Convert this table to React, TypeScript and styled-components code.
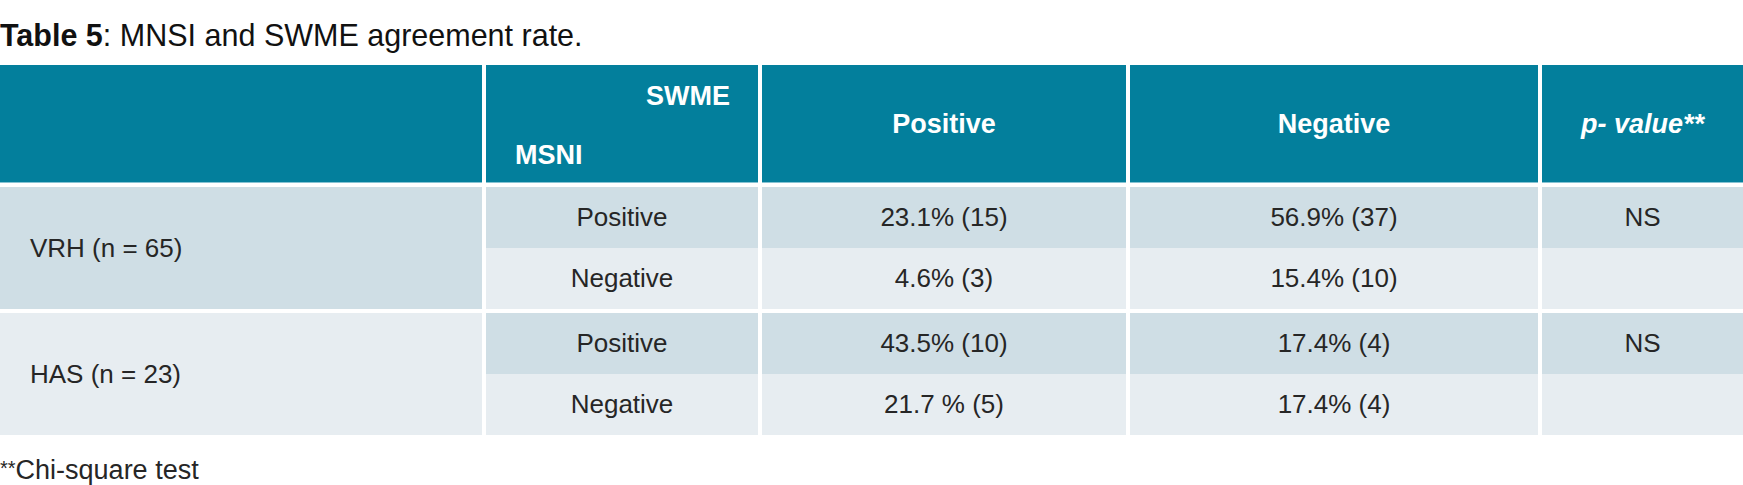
import React from 'react';
import styled, { createGlobalStyle, css } from 'styled-components';

const TEAL = '#037f9c';
const ROW_DARK = '#cfdee5';
const ROW_LIGHT = '#e7edf1';
const FONT = '"Liberation Sans", Arial, Helvetica, sans-serif';

type Tone = 'dark' | 'light';

const GlobalStyle = createGlobalStyle`
  html, body {
    margin: 0;
    padding: 0;
    background: #ffffff;
  }
  body {
    font-family: ${FONT};
    color: #262626;
  }
`;

const columns = css`
  display: grid;
  grid-template-columns: 482px 272px 364px 408px 1fr;
  column-gap: 4px;
  background: #ffffff;
`;

const Page = styled.div`
  display: flex;
  flex-direction: column;
  width: 1743px;
  padding-top: 17px;
`;

const Title = styled.h1`
  margin: 0 0 12px;
  font-size: 30.5px;
  line-height: 36px;
  font-weight: 400;
  color: #111;

  strong {
    font-weight: 700;
  }
`;

const Table = styled.div`
  display: flex;
  flex-direction: column;
  gap: 4px;
`;

const HeadRow = styled.div`
  ${columns}
  height: 118px;
`;

const HeadCell = styled.div`
  display: flex;
  align-items: center;
  justify-content: center;
  padding-top: 2px;
  background: ${TEAL};
  border-bottom: 1px solid #86c2d2;
  color: #ffffff;
  font-size: 27px;
  line-height: 27px;
  font-weight: 700;

  em {
    font-style: italic;
  }
`;

const CornerCell = styled(HeadCell)`
  flex-direction: column;
  align-items: stretch;
  justify-content: space-between;
  padding: 18px 28px 13px 29px;
`;

const CornerLabel = styled.span<{ $align: 'start' | 'end' }>`
  align-self: ${(p) => (p.$align === 'end' ? 'flex-end' : 'flex-start')};
`;

const Group = styled.div`
  ${columns}
  grid-template-rows: 61px 61px;
`;

const LabelCell = styled.div<{ $tone: Tone }>`
  grid-row: span 2;
  display: flex;
  align-items: center;
  padding-left: 30px;
  background: ${(p) => (p.$tone === 'dark' ? ROW_DARK : ROW_LIGHT)};
  font-size: 26px;
`;

const Cell = styled.div<{ $tone: Tone }>`
  display: flex;
  align-items: center;
  justify-content: center;
  background: ${(p) => (p.$tone === 'dark' ? ROW_DARK : ROW_LIGHT)};
  font-size: 26px;
`;

const Footnote = styled.p`
  margin: 17px 0 0;
  font-size: 27px;
  line-height: 32px;
  color: #262626;
`;

const Stars = styled.span`
  font-size: 20px;
  vertical-align: 4px;
`;

const groups: { label: string; tone: Tone; rows: string[][] }[] = [
  {
    label: 'VRH (n = 65)',
    tone: 'dark',
    rows: [
      ['Positive', '23.1% (15)', '56.9% (37)', 'NS'],
      ['Negative', '4.6% (3)', '15.4% (10)', ''],
    ],
  },
  {
    label: 'HAS (n = 23)',
    tone: 'light',
    rows: [
      ['Positive', '43.5% (10)', '17.4% (4)', 'NS'],
      ['Negative', '21.7 % (5)', '17.4% (4)', ''],
    ],
  },
];

export default function App() {
  return (
    <>
      <GlobalStyle />
      <Page>
        <Title>
          <strong>Table 5</strong>: MNSI and SWME agreement rate.
        </Title>
        <Table>
          <HeadRow>
            <HeadCell />
            <CornerCell>
              <CornerLabel $align="end">SWME</CornerLabel>
              <CornerLabel $align="start">MSNI</CornerLabel>
            </CornerCell>
            <HeadCell>Positive</HeadCell>
            <HeadCell>Negative</HeadCell>
            <HeadCell>
              <em>p- value**</em>
            </HeadCell>
          </HeadRow>
          {groups.map((g) => (
            <Group key={g.label}>
              <LabelCell $tone={g.tone}>{g.label}</LabelCell>
              {g.rows.map((row, i) =>
                row.map((value, j) => (
                  <Cell key={`${i}-${j}`} $tone={i === 0 ? 'dark' : 'light'}>
                    {value}
                  </Cell>
                ))
              )}
            </Group>
          ))}
        </Table>
        <Footnote>
          <Stars>**</Stars>Chi-square test
        </Footnote>
      </Page>
    </>
  );
}
